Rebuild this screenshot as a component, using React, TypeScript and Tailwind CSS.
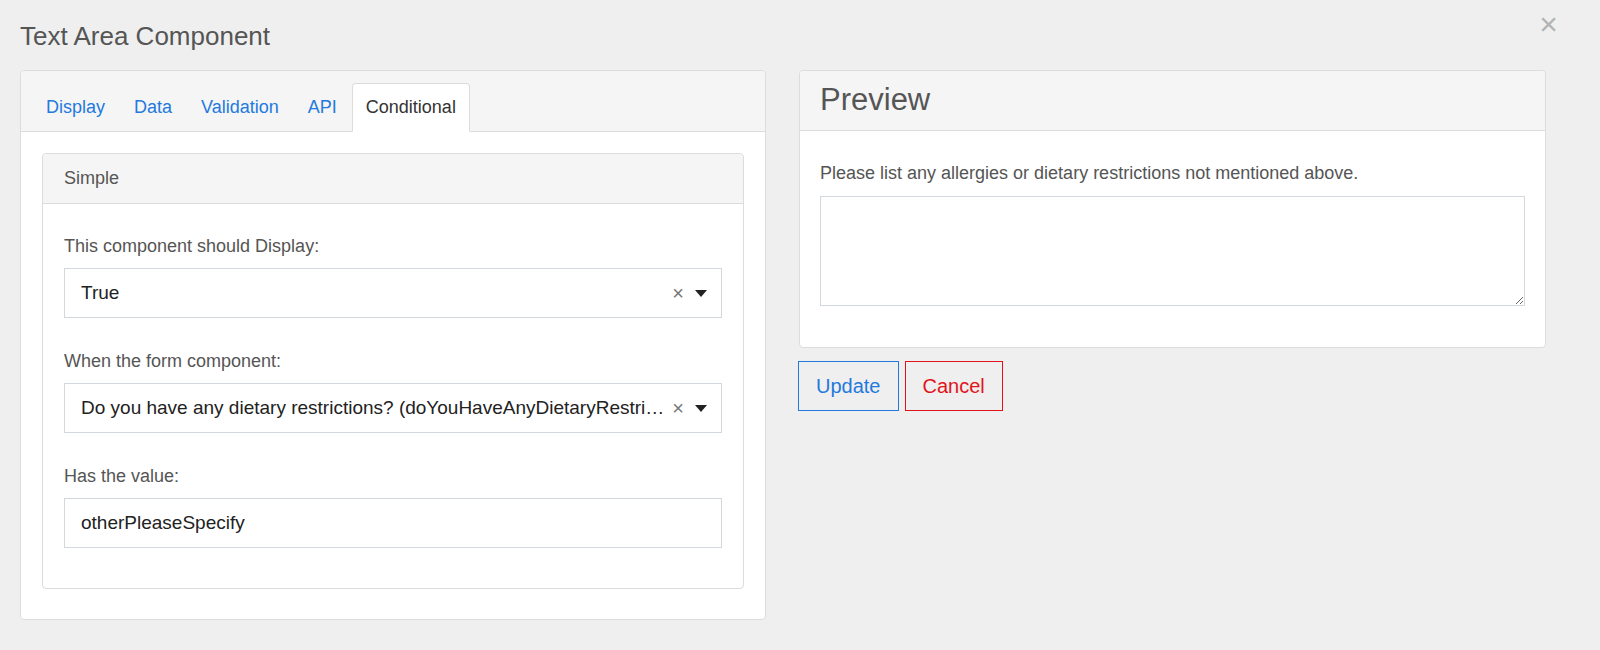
import { useState } from "react";

const tabs = ["Display", "Data", "Validation", "API", "Conditional"];

function Caret() {
  return (
    <svg width="12" height="7" viewBox="0 0 12 7" className="shrink-0">
      <path d="M0 0 L12 0 L6 7 Z" fill="#222" />
    </svg>
  );
}

function SelectBox({ value }: { value: string }) {
  return (
    <div className="flex items-center h-[50px] border border-[#d3d8de] bg-white pl-[16px] pr-[14px]">
      <span className="flex-1 min-w-0 truncate text-[19px] text-[#222]">{value}</span>
      <span className="text-[20px] leading-none text-[#777] mr-[11px]">×</span>
      <Caret />
    </div>
  );
}

export default function App() {
  const [active, setActive] = useState("Conditional");
  const [value, setValue] = useState("otherPleaseSpecify");

  return (
    <div
      className="min-h-[650px] bg-[#efefef] pl-[20px] pr-[54px] relative"
      style={{ fontFamily: '"Liberation Sans", Arial, sans-serif' }}
    >
      <button className="absolute right-[42px] top-[8px] text-[#b3b3b3] text-[32px] leading-none font-light">×</button>
      <h1 className="pt-[20px] text-[26px] leading-[32px] text-[#555] font-light">Text Area Component</h1>

      <div className="mt-[18px] grid grid-cols-[746px_747px] gap-[33px] items-start">
        {/* Left: edit form */}
        <div className="border border-[#dcdcdc] rounded-[4px] bg-white">
          <div className="bg-[#f5f5f5] border-b border-[#dcdcdc] rounded-t-[4px] pl-[10px] pt-[11px] flex items-end h-[61px]">
            {tabs.map((t) => (
              <button
                key={t}
                onClick={() => setActive(t)}
                className={`h-[49px] px-[13px] ml-[1px] text-[18px] border rounded-t-[4px] -mb-px ${
                  active === t
                    ? "bg-white border-[#dcdcdc] border-b-white text-[#333]"
                    : "border-transparent text-[#2479de]"
                }`}
              >
                {t}
              </button>
            ))}
          </div>

          <div className="px-[21px] pt-[21px] pb-[30px]">
            <div className="border border-[#dcdcdc] rounded-[4px]">
              <div className="bg-[#f5f5f5] border-b border-[#dcdcdc] rounded-t-[4px] h-[50px] flex items-center px-[21px] text-[18px] text-[#555]">
                Simple
              </div>
              <div className="px-[21px] pt-[31px] pb-[40px] flex flex-col gap-[32px]">
                <div>
                  <label className="block text-[18px] leading-[22px] text-[#555] mb-[11px]">This component should Display:</label>
                  <SelectBox value="True" />
                </div>
                <div>
                  <label className="block text-[18px] leading-[22px] text-[#555] mb-[11px]">When the form component:</label>
                  <SelectBox value="Do you have any dietary restrictions? (doYouHaveAnyDietaryRestrictions)" />
                </div>
                <div>
                  <label className="block text-[18px] leading-[22px] text-[#555] mb-[11px]">Has the value:</label>
                  <input
                    value={value}
                    onChange={(e) => setValue(e.target.value)}
                    className="w-full h-[50px] border border-[#d3d8de] bg-white px-[16px] text-[19px] text-[#222] outline-none"
                  />
                </div>
              </div>
            </div>
          </div>
        </div>

        {/* Right: preview */}
        <div className="flex flex-col">
          <div className="border border-[#dcdcdc] rounded-[4px] bg-white">
            <div className="bg-[#f5f5f5] border-b border-[#dcdcdc] rounded-t-[4px] h-[60px] flex items-center px-[20px] text-[31px] text-[#555]">
              Preview
            </div>
            <div className="px-[20px] pt-[31px] pb-[41px]">
              <label className="block text-[18px] leading-[22px] text-[#555] mb-[12px]">
                Please list any allergies or dietary restrictions not mentioned above.
              </label>
              <textarea className="block w-full h-[110px] border border-[#d3d8de] bg-white outline-none px-[12px] py-[8px] text-[18px]" />
            </div>
          </div>
          <div className="mt-[13px] flex gap-[6px] -ml-px">
            <button className="h-[50px] px-[17px] border border-[#2479de] text-[#2479de] text-[20px]">Update</button>
            <button className="h-[50px] px-[17px] border border-[#e3131b] text-[#e3131b] text-[20px]">Cancel</button>
          </div>
        </div>
      </div>
    </div>
  );
}
